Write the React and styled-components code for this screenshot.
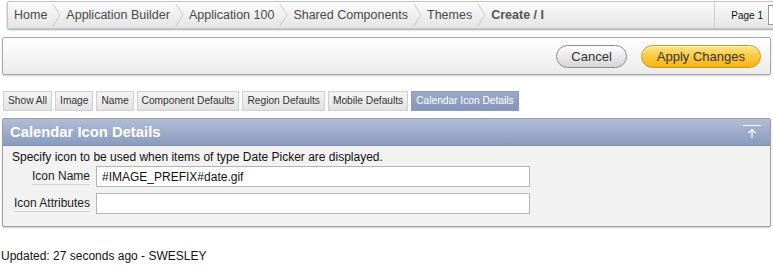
import React from "react";
import styled, { createGlobalStyle } from "styled-components";

const GlobalStyle = createGlobalStyle`
  body {
    margin: 0;
    background: #ffffff;
    font-family: "Liberation Sans", Arial, sans-serif;
    color: #222;
  }
`;

const Page = styled.div`
  width: 773px;
  height: 270px;
  overflow: hidden;
`;

const Breadcrumb = styled.div`
  display: flex;
  align-items: stretch;
  height: 26px;
  margin: 1px -40px 0 7px;
  border: 1px solid #c4c4c4;
  border-radius: 2px;
  background: linear-gradient(#fbfbfb, #e4e4e4);
  box-shadow: 0 1px 2px rgba(0, 0, 0, 0.35);
`;

const Crumbs = styled.div`
  display: flex;
  align-items: center;
  flex: 1;
  padding-left: 1px;
`;

const Crumb = styled.span`
  font-size: 12.5px;
  color: ${(p) => (p.$current ? "#555" : "#4a4a4a")};
  font-weight: ${(p) => (p.$current ? "bold" : "normal")};
  padding: 0 5px;
`;

const Chevron = styled.svg`
  width: 9px;
  height: 26px;
`;

const PageInfo = styled.div`
  display: flex;
  align-items: center;
  gap: 5px;
  border-left: 1px solid #cfcfcf;
  padding: 0 4px 0 16px;
  font-size: 10px;
  color: #111;
`;

const PageSelect = styled.div`
  width: 38px;
  height: 18px;
  border: 1px solid #999;
  background: #fff;
`;

const ButtonBar = styled.div`
  display: flex;
  justify-content: flex-end;
  align-items: center;
  gap: 14px;
  height: 36px;
  margin: 8px 2px 0 2px;
  padding-right: 9px;
  border: 1px solid #a8a8a8;
  border-radius: 2px;
  background: linear-gradient(#ffffff, #ebebeb);
  box-shadow: 0 1px 2px rgba(0, 0, 0, 0.2);
`;

const Pill = styled.button`
  height: 23px;
  padding: 0 ${(p) => (p.$hot ? "15px" : "14px")};
  border-radius: 12px;
  font-family: "Liberation Sans", Arial, sans-serif;
  font-size: 13px;
  color: #333;
  cursor: pointer;
  border: 1px solid ${(p) => (p.$hot ? "#c79a10" : "#8c8c8c")};
  background: ${(p) =>
    p.$hot
      ? "linear-gradient(#fde68a, #fcc93c 50%, #f5b313)"
      : "linear-gradient(#ffffff, #e9e9e9 50%, #d6d6d6)"};
  box-shadow: inset 0 1px 0 rgba(255, 255, 255, 0.7);
`;

const Tabs = styled.div`
  display: flex;
  gap: 3px;
  margin: 16px 0 0 3px;
`;

const Tab = styled.div`
  height: 18px;
  line-height: 18px;
  padding: 0 4px;
  font-size: 10.2px;
  color: ${(p) => (p.$active ? "#fff" : "#333")};
  background: ${(p) => (p.$active ? "linear-gradient(#98a8c8, #8597bb)" : "linear-gradient(#f4f4f4, #e2e2e2)")};
  border: 1px solid ${(p) => (p.$active ? "#8a9bbd" : "#cfcfcf")};
`;

const Region = styled.div`
  margin: 7px 2px 0 2px;
  border: 1px solid #a0a0a0;
  border-radius: 2px;
  background: #f2f2f2;
  box-shadow: 0 1px 2px rgba(0, 0, 0, 0.2);
`;

const RegionHeader = styled.div`
  display: flex;
  align-items: center;
  justify-content: space-between;
  height: 26px;
  padding: 0 9px 0 7px;
  background: linear-gradient(#b0bdd7, #8a9bbd);
  border-bottom: 1px solid #7e8fb2;
`;

const RegionTitle = styled.h2`
  margin: 0;
  font-size: 14.8px;
  font-weight: bold;
  color: #fff;
`;

const RegionBody = styled.div`
  padding: 4px 10px 6px 9px;
`;

const Help = styled.div`
  font-size: 12px;
  line-height: 14px;
  color: #111;
  margin-bottom: 2px;
`;

const Field = styled.div`
  display: grid;
  grid-template-columns: 78px 434px;
  column-gap: 6px;
  align-items: center;
  margin-bottom: 6px;
`;

const Label = styled.label`
  justify-self: end;
  font-size: 12px;
  line-height: 14px;
  color: #222;
  padding-bottom: 1px;
  border-bottom: 1px solid #d2d2d2;
`;

const Input = styled.input`
  box-sizing: border-box;
  height: 21px;
  width: 100%;
  padding: 0 5px;
  border: 1px solid #b5b5b5;
  background: #fff;
  font-family: "Liberation Sans", Arial, sans-serif;
  font-size: 12px;
  color: #111;
`;

const Footer = styled.div`
  margin: 22px 0 0 1px;
  font-size: 12px;
  color: #111;
`;

const Sep = () => (
  <Chevron viewBox="0 0 9 26">
    <polyline points="1,2 8,13 1,24" fill="none" stroke="#cacaca" strokeWidth="1" />
  </Chevron>
);

const crumbs = ["Home", "Application Builder", "Application 100", "Shared Components", "Themes"];
const tabs = ["Show All", "Image", "Name", "Component Defaults", "Region Defaults", "Mobile Defaults", "Calendar Icon Details"];

const App = () => {
  return (
    <Page>
      <GlobalStyle />
      <Breadcrumb>
        <Crumbs>
          {crumbs.map((c) => (
            <React.Fragment key={c}>
              <Crumb>{c}</Crumb>
              <Sep />
            </React.Fragment>
          ))}
          <Crumb $current>Create / I</Crumb>
        </Crumbs>
        <PageInfo>
          <span>Page 1</span>
          <PageSelect />
        </PageInfo>
      </Breadcrumb>

      <ButtonBar>
        <Pill>Cancel</Pill>
        <Pill $hot>Apply Changes</Pill>
      </ButtonBar>

      <Tabs>
        {tabs.map((t) => (
          <Tab key={t} $active={t === "Calendar Icon Details"}>
            {t}
          </Tab>
        ))}
      </Tabs>

      <Region>
        <RegionHeader>
          <RegionTitle>Calendar Icon Details</RegionTitle>
          <svg width="18" height="18" viewBox="0 0 18 18">
            <line x1="0" y1="2.5" x2="18" y2="2.5" stroke="#fff" strokeWidth="1" />
            <polyline points="5.5,10 9,6.5 12.5,10" fill="none" stroke="#fff" strokeWidth="1.2" />
            <line x1="9" y1="7" x2="9" y2="15" stroke="#fff" strokeWidth="1.2" />
          </svg>
        </RegionHeader>
        <RegionBody>
          <Help>Specify icon to be used when items of type Date Picker are displayed.</Help>
          <Field>
            <Label>Icon Name</Label>
            <Input defaultValue="#IMAGE_PREFIX#date.gif" />
          </Field>
          <Field>
            <Label>Icon Attributes</Label>
            <Input defaultValue="" />
          </Field>
        </RegionBody>
      </Region>

      <Footer>Updated: 27 seconds ago - SWESLEY</Footer>
    </Page>
  );
};

export default App;
